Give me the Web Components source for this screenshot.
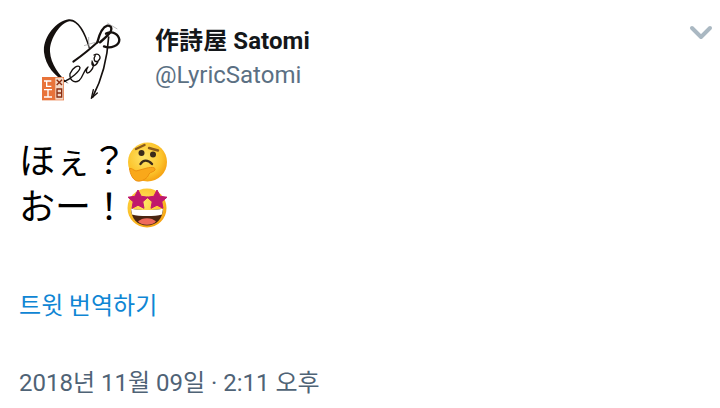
<!DOCTYPE html>
<html lang="ja">
<head>
<meta charset="utf-8">
<style>
  html, body { margin: 0; background: #fff; }
  body { width: 720px; height: 408px; overflow: hidden; font-family: Roboto, "Noto Sans CJK JP", sans-serif; }
</style>
</head>
<body>
<tweet-card>
  <tweet-header slot="header" name="作詩屋 Satomi" handle="@LyricSatomi"></tweet-header>
  <tweet-text slot="text">
    <div>ほぇ？<tweet-emoji kind="thinking"></tweet-emoji></div>
    <div>おー！<tweet-emoji kind="stars"></tweet-emoji></div>
  </tweet-text>
  <tweet-translate slot="translate">트윗 번역하기</tweet-translate>
  <tweet-date slot="date">2018년 11월 09일 · 2:11 오후</tweet-date>
</tweet-card>

<script>
class TweetCard extends HTMLElement {
  constructor() {
    super();
    this.attachShadow({ mode: 'open' });
    this.shadowRoot.innerHTML = `
      <style>
        :host { display: flex; flex-direction: column; height: 408px; box-sizing: border-box; }
      </style>
      <slot name="header"></slot>
      <slot name="text"></slot>
      <slot name="translate"></slot>
      <slot name="date"></slot>`;
  }
}

class TweetHeader extends HTMLElement {
  constructor() {
    super();
    this.attachShadow({ mode: 'open' });
    this.shadowRoot.innerHTML = `
      <style>
        :host { display: flex; height: 139px; padding: 5px 0 0 20px; box-sizing: border-box; }
        .avatar { width: 120px; height: 105px; flex: none; filter: blur(.35px); }
        .who { margin-left: 15px; padding-top: 19px; flex: 1; }
        .name { font: 700 24px/34px Roboto, "Noto Sans CJK JP", sans-serif; color: #14171a; white-space: nowrap; letter-spacing: .08px; }
        .handle { font: 400 24px/34px Roboto, sans-serif; color: #5b7083; white-space: nowrap; }
        .caret { width: 24px; height: 16px; margin: 20px 7px 0 0; flex: none; }
      </style>
      <svg class="avatar" viewBox="0 0 360 315">
        <path fill="#15100e" d="M210 130C198 78 172 40 146 43C108 48 68 98 72 142C76 180 104 218 146 236C118 212 92 176 90 140C88 104 120 54 148 49C170 46 192 80 206 130Z"/>
        <path fill="none" stroke="#15100e" stroke-width="6" stroke-linecap="round" d="M160 170C182 154 208 134 234 110"/>
        <path fill="none" stroke="#15100e" stroke-width="4" stroke-linecap="round" stroke-linejoin="round" d="M132 230C152 222 180 198 180 188C176 176 156 190 150 206C148 222 160 238 178 226C190 216 190 196 204 186C196 198 198 212 212 198C220 190 222 178 216 168M216 172C214 186 226 186 234 170M222 150C238 142 246 158 234 168C224 174 218 162 226 152"/>
        <path fill="none" stroke="#15100e" stroke-width="7" stroke-linecap="round" stroke-linejoin="round" d="M232 112C238 88 248 66 262 62C276 60 280 76 262 92C250 104 244 108 240 112"/>
        <path fill="none" stroke="#15100e" stroke-width="7" stroke-linecap="round" stroke-linejoin="round" d="M258 86C278 76 296 88 298 104C298 122 272 132 252 124"/>
        <path fill="none" stroke="#15100e" stroke-width="5" stroke-linecap="round" d="M266 96C262 160 244 226 218 276"/>
        <path fill="none" stroke="#15100e" stroke-width="4" stroke-linecap="round" stroke-linejoin="round" d="M220 254L214 280L232 264"/>
        <path fill="none" stroke="#999" stroke-width="2" d="M206 96V128M262 54L292 72M192 122L226 112"/>
        <rect x="66" y="216" width="66" height="70" fill="#e8733a"/>
        <path fill="none" stroke="#fff" stroke-width="4" d="M72 228H94M80 228V244H94M72 254H96M84 254V276M72 276H96"/>
        <rect x="106" y="218" width="24" height="66" fill="#f3d8c6"/>
        <path fill="none" stroke="#8a2c10" stroke-width="4" d="M110 224L126 240M126 224L110 240M111 252H125V276H111ZM111 264H125"/>
      </svg>
      <div class="who">
        <div class="name"></div>
        <div class="handle"></div>
      </div>
      <svg class="caret" viewBox="0 0 24 16">
        <path fill="none" stroke="#aab8c2" stroke-width="4" stroke-linecap="round" stroke-linejoin="round" d="M3 3L12 12L21 3"/>
      </svg>`;
    this.shadowRoot.querySelector('.name').textContent = this.getAttribute('name');
    this.shadowRoot.querySelector('.handle').textContent = this.getAttribute('handle');
  }
}

class TweetText extends HTMLElement {
  constructor() {
    super();
    this.attachShadow({ mode: 'open' });
    this.shadowRoot.innerHTML = `
      <style>
        :host { display: block; padding-left: 19px; height: 111px; font: 400 36px/46px "Liberation Sans", "Noto Sans CJK JP", sans-serif; color: #000; }
      </style>
      <slot></slot>`;
  }
}

// emoji are drawn, there is no emoji font to rely on
const FACE = `<stop offset="0" stop-color="#fee468"/><stop offset=".65" stop-color="#fcc42c"/><stop offset="1" stop-color="#f49a0c"/>`;
const EMOJI = {
  thinking: `
    <defs><radialGradient id="t" cx=".42" cy=".38" r=".68">${FACE}</radialGradient></defs>
    <circle cx="25.500" cy="22" r="19.500" fill="url(#t)"/>
    <path d="M14 9L22.500 5" fill="none" stroke="#8a5a1a" stroke-width="2.400" stroke-linecap="round"/>
    <path d="M27 8L36 10.500" fill="none" stroke="#8a5a1a" stroke-width="2.400" stroke-linecap="round"/>
    <circle cx="19.500" cy="13" r="3" fill="#3b2a1a"/><circle cx="31" cy="14.500" r="3" fill="#3b2a1a"/>
    <path d="M18.500 24C21 19.500 26 19.500 30 24" fill="none" stroke="#3b2a1a" stroke-width="2.400" stroke-linecap="round"/>
    <path d="M7.500 28.500C10 28 11 30 14 31L25 28C29 27 34 27 33 30C32 32 28 32 27 34C26 38 20 42 15 41C11 40 8 34 7.500 28.500Z" fill="#f9a81a" stroke="#ea8a0c" stroke-width=".9"/>`,
  stars: `
    <defs><radialGradient id="s" cx=".42" cy=".38" r=".68">${FACE}</radialGradient></defs>
    <circle cx="25" cy="22" r="19.500" fill="url(#s)"/>
    <path d="M9 22.500C15 24.500 35 24.500 41 22.500C41 33 34 39.500 25 39.500C16 39.500 9 33 9 22.500Z" fill="#4a2612"/>
    <path d="M9 22.500C15 24.500 35 24.500 41 22.500L40 28.500C33 30.500 17 30.500 10 28.500Z" fill="#fff"/>
    <path d="M16 35.500C20 31 30 31 34 35.500C30 39.800 20 39.800 16 35.500Z" fill="#ef6a5c"/>
    <path d="M16 4L19.200 10.300L26 11.200L20.800 15.700L22 22.300L16 19.200L10 22.300L11.200 15.700L6 11.200L12.800 10.300Z" fill="#c0186c" stroke="#c0186c" stroke-linejoin="round"/>
    <path d="M35 4L38.200 10.300L45 11.200L39.800 15.700L41 22.300L35 19.200L29 22.300L30.200 15.700L25 11.200L31.800 10.300Z" fill="#c0186c" stroke="#c0186c" stroke-linejoin="round"/>`
};

class TweetEmoji extends HTMLElement {
  constructor() {
    super();
    this.attachShadow({ mode: 'open' });
    const kind = this.getAttribute('kind');
    this.shadowRoot.innerHTML = `
      <style>
        :host { display: inline-block; width: 50px; height: 36px; vertical-align: -2px; margin-left: -5px; }
        svg { display: block; width: 50px; height: 46px; }
      </style>
      <svg viewBox="0 0 50 46">${EMOJI[kind]}</svg>`;
  }
}

class TweetTranslate extends HTMLElement {
  constructor() {
    super();
    this.attachShadow({ mode: 'open' });
    this.shadowRoot.innerHTML = `
      <style>
        :host { display: block; padding-left: 19px; height: 77px; box-sizing: border-box; padding-top: 34px; font: 400 24px/40px "Noto Sans CJK KR", sans-serif; color: #0f86d4; letter-spacing: .08px; }
      </style>
      <slot></slot>`;
  }
}

class TweetDate extends HTMLElement {
  constructor() {
    super();
    this.attachShadow({ mode: 'open' });
    this.shadowRoot.innerHTML = `
      <style>
        :host { display: block; padding: 40px 0 0 19px; font: 400 24px/32px Roboto, "Noto Sans CJK KR", sans-serif; color: #4f6376; white-space: nowrap; }
      </style>
      <slot></slot>`;
  }
}

customElements.define('tweet-card', TweetCard);
customElements.define('tweet-header', TweetHeader);
customElements.define('tweet-text', TweetText);
customElements.define('tweet-emoji', TweetEmoji);
customElements.define('tweet-translate', TweetTranslate);
customElements.define('tweet-date', TweetDate);
</script>
</body>
</html>
